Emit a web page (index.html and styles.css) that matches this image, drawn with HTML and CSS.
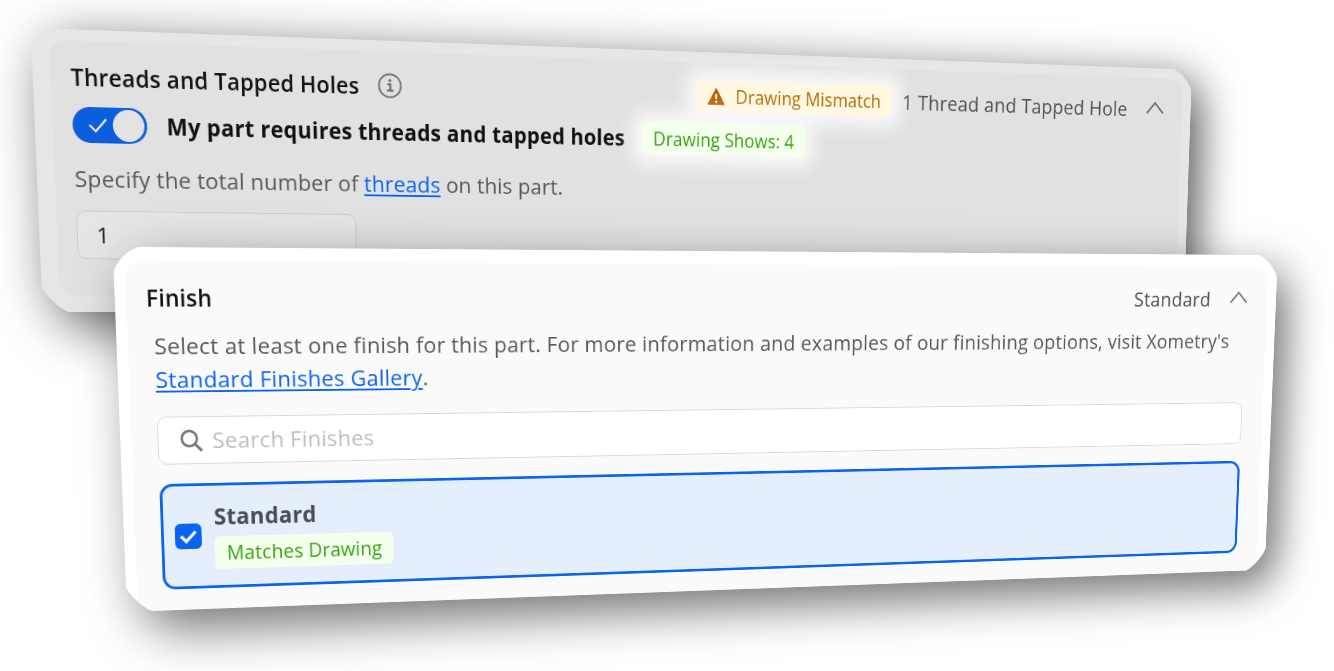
FILE: index.html
```html
<!DOCTYPE html>
<html lang="en">
<head>
<meta charset="utf-8">
<title>Part configuration</title>
<link rel="stylesheet" href="styles.css">
</head>
<body>
<main class="stage">
  <section class="card card-threads" data-quad="30.7,27.8 1192,69.7 1183.7,312 42.6,312">
    <div class="panel">
      <header class="head">
        <h2 class="title">Threads and Tapped Holes</h2>
        <svg class="info" viewBox="0 0 28 28" fill="none" stroke="#6f6f6f">
          <circle cx="14" cy="14" r="12.6" stroke-width="2"/>
          <path d="M11 12.4h3.4v6.8M10.4 19.4h7.6" stroke-width="2.2"/>
          <circle cx="14" cy="8.4" r="1.6" fill="#6f6f6f" stroke="none"/>
        </svg>
        <div class="summary">
          <span class="badge badge-warn">
            <svg class="warn" viewBox="0 0 22 20"><path d="M11 .8 21.4 19.2H.6Z" fill="#b26200" stroke="#b26200" stroke-linejoin="round"/><path d="M11 7v6" stroke="#fff8e1" stroke-width="2.4"/><circle cx="11" cy="16" r="1.5" fill="#fff8e1"/></svg>
            <span class="badge-text">Drawing Mismatch</span>
          </span>
          <span class="value">1 Thread and Tapped Hole</span>
          <svg class="chevron" viewBox="0 0 26 16" fill="none"><path d="M1.5 14.5 13 2l11.5 12.5" stroke="#666" stroke-width="2"/></svg>
        </div>
      </header>
      <div class="toggle-row">
        <span class="toggle">
          <svg class="toggle-check" viewBox="0 0 20 16" fill="none"><path d="m1 8 6.5 6.5L19 1.5" stroke="#f2f5fb" stroke-width="2"/></svg>
          <span class="knob"></span>
        </span>
        <span class="toggle-label">My part requires threads and tapped holes</span>
        <span class="badge badge-ok badge-glow">Drawing Shows: 4</span>
      </div>
      <p class="copy">Specify the total number of <a class="link">threads</a> on this part.</p>
      <div class="count">1</div>
    </div>
  </section>

  <section class="card card-finish" data-quad="112.7,246.8 1277.8,255.1 1264.7,569.8 126.9,611.9">
    <div class="panel">
      <header class="head">
        <h2 class="title">Finish</h2>
        <div class="summary">
          <span class="value">Standard</span>
          <svg class="chevron" viewBox="0 0 26 16" fill="none"><path d="M1.5 14.5 13 2l11.5 12.5" stroke="#777" stroke-width="2"/></svg>
        </div>
      </header>
      <p class="copy">Select at least one finish for this part. For more information and examples of our finishing options, visit Xometry's<br><a class="link">Standard Finishes Gallery</a>.</p>
      <div class="search">
        <svg class="glass" viewBox="0 0 26 26" fill="none" stroke="#777"><circle cx="10.5" cy="10.5" r="8.6" stroke-width="2.8"/><path d="m17 17 7.5 7.5" stroke-width="3.2"/></svg>
        <span class="placeholder">Search Finishes</span>
      </div>
      <div class="option">
        <span class="checkbox"><svg class="tick" viewBox="0 0 20 16" fill="none"><path d="m1.5 8 6 6L18.5 2.5" stroke="#fff" stroke-width="3.4"/></svg></span>
        <div class="option-body">
          <span class="option-name">Standard</span>
          <span class="badge badge-ok">Matches Drawing</span>
        </div>
      </div>
    </div>
  </section>
</main>
<script src="tilt.js"></script>
</body>
</html>
```
FILE: styles.css
```css
* { box-sizing: border-box; }

body {
  margin: 0;
  background: #fff;
  overflow: hidden;
  font-family: "Open Sans", "Noto Sans", sans-serif;
}

.stage {
  position: relative;
  width: 1334px;
  height: 671px;
  overflow: hidden;
}

/* The two cards are tilted freely over the stage. */
.card {
  position: absolute;
  left: 0;
  top: 0;
  width: 1422px;
  transform-origin: 0 0;
  border-radius: 28px;
  overflow: hidden;
  font-size: 24.4px;
  line-height: 36px;
  letter-spacing: .29px;
  color: #585858;
}

.card-threads {
  height: 300px;
  padding: 12px 13px 17px 19px;
  background: #e6e6e6;
  box-shadow: 15px 15px 58px rgba(0, 0, 0, .66);
  corner-shape: round superellipse(.6) superellipse(.4) superellipse(.4);
}

.card-finish {
  height: 393px;
  padding: 15px 13px 0 12px;
  background: #fff;
  box-shadow: 17px 21px 56px rgba(0, 0, 0, .55);
  corner-shape: superellipse(.6) superellipse(.5) superellipse(.4) superellipse(.4);
}

.panel {
  display: flex;
  flex-direction: column;
  height: 100%;
  border-radius: 16px;
}

.card-threads .panel { background: #e1e1e1; padding: 20px 26px 0 21px; }
.card-finish .panel { background: #fafafa; border-radius: 16px 16px 0 0; padding: 21px 28px 0; }

.head { display: flex; align-items: center; height: 36px; }
.card-finish .head { margin-left: -7px; }

.title { margin: 0; font-size: 24.3px; font-weight: 600; line-height: 36px; letter-spacing: .23px; color: #111; white-space: nowrap; }
.info { width: 28px; height: 28px; margin: 0 0 2px 21px; }
.summary { display: flex; align-items: center; margin-left: auto; color: #505050; white-space: nowrap; }
.chevron { width: 26px; height: 16px; margin: 0 -1px 4px 26px; }

.badge {
  display: inline-flex;
  align-items: center;
  height: 36px;
  padding: 0 13px;
  border-radius: 6px;
  font-size: 21.4px;
  letter-spacing: .1px;
  white-space: nowrap;
}
.badge-warn { gap: 13px; margin-right: 14px; padding: 0 14px; background: #fff8e1; color: #b26a00; box-shadow: 0 0 20px 12px #f9f9f9; }
.badge-ok { background: #f5ffee; color: #38a313; }
.badge-glow { margin-top: 0; padding: 0 14px; box-shadow: 0 0 20px 12px #f9f9f9; }
.warn { width: 22px; height: 20px; }

.toggle-row { display: flex; align-items: center; height: 38px; margin-top: 13px; }
.toggle {
  display: flex;
  align-items: center;
  justify-content: space-between;
  width: 80px;
  height: 38px;
  padding: 0 3px 0 17px;
  border-radius: 19px;
  background: #0b5fdc;
}
.toggle-check { width: 20px; height: 16px; }
.knob { width: 34px; height: 34px; border-radius: 50%; background: #e3e3e3; }
.toggle-label { margin: 0 21px 0 21px; font-size: 24.3px; font-weight: 700; letter-spacing: .27px; color: #111; white-space: nowrap; }

.copy { margin: 0; white-space: nowrap; }
.card-threads .copy { margin-top: 20px; letter-spacing: .18px; }
.card-finish .copy { margin-top: 15px; }
.link { color: #0b64f0; text-decoration: underline; text-decoration-thickness: 2px; text-underline-offset: 3px; }

.count {
  width: 310px;
  height: 52px;
  margin-top: 16px;
  padding: 7px 20px;
  border: 1.5px solid #cbcbcb;
  border-radius: 10px;
  background: #e5e5e5;
  color: #222;
}

.search {
  display: flex;
  align-items: center;
  gap: 10px;
  height: 52px;
  margin: 22px 1px 0 0;
  padding: 0 23px;
  border: 1.5px solid #d8d8d8;
  border-radius: 10px;
  background: #fff;
}
.glass { width: 25px; height: 25px; }
.placeholder { color: #bdbdbd; }

.option {
  display: flex;
  align-items: center;
  gap: 14px;
  height: 116px;
  margin: 21px 1px 0 0;
  padding: 0 12px;
  border: 3px solid #0b64f0;
  border-radius: 14px;
  background: #e5effc;
}
.checkbox { display: flex; align-items: center; justify-content: center; width: 29px; height: 28px; border-radius: 6px; background: #0b64f0; }
.tick { width: 19px; height: 16px; }
.option-body { display: flex; flex-direction: column; align-items: flex-start; gap: 4px; margin-top: -3px; }
.option-name { font-weight: 700; color: #4a4d52; }
```
FILE: tilt.js
```js
// Projects each card onto the four corner points listed in data-quad (clockwise from top left).
document.querySelectorAll('[data-quad]').forEach(function (card) {
  var p = card.dataset.quad.split(' ').map(function (s) { return s.split(',').map(Number); });
  var w = card.offsetWidth, h = card.offsetHeight;
  var dx1 = p[1][0] - p[2][0], dy1 = p[1][1] - p[2][1];
  var dx2 = p[3][0] - p[2][0], dy2 = p[3][1] - p[2][1];
  var sx = p[0][0] - p[1][0] + p[2][0] - p[3][0];
  var sy = p[0][1] - p[1][1] + p[2][1] - p[3][1];
  var det = dx1 * dy2 - dx2 * dy1;
  var g = (sx * dy2 - dx2 * sy) / det;
  var k = (dx1 * sy - sx * dy1) / det;
  var a = p[1][0] - p[0][0] + g * p[1][0], b = p[3][0] - p[0][0] + k * p[3][0];
  var d = p[1][1] - p[0][1] + g * p[1][1], e = p[3][1] - p[0][1] + k * p[3][1];
  card.style.transform = 'matrix3d(' + [
    a / w, d / w, 0, g / w,
    b / h, e / h, 0, k / h,
    0, 0, 1, 0,
    p[0][0], p[0][1], 0, 1
  ].join(',') + ')';
});
```
